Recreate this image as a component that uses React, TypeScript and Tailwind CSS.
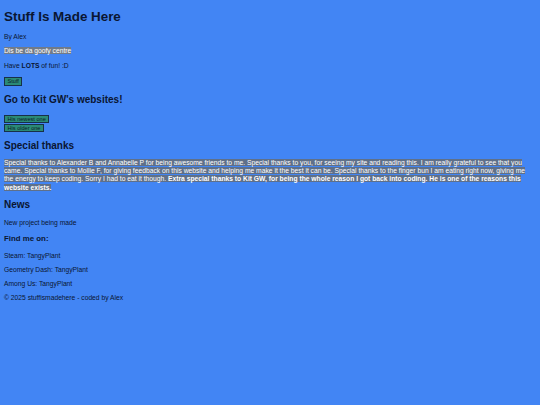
export default function App() {
  const btn =
    "border border-[#173048] bg-[#2a8a76] px-[2.5px] text-[5.6px] leading-[7px] text-[#0a1a2a]";

  return (
    <div className="min-h-[405px] w-full bg-[#4285f4] px-[4px] font-['Liberation_Sans',Arial,sans-serif] text-[6.72px] leading-[7.75px] text-[#0a1632]">
      <div className="flex flex-col items-start">
        <h1 className="mt-[8.5px] text-[13.4px] font-bold leading-[15px]">Stuff Is Made Here</h1>
        <p className="mt-[9.5px]">By Alex</p>
        <p className="mt-[6.25px]">
          <span className="bg-[#717b89] text-white">Dis be da goofy centre</span>
        </p>
        <p className="mt-[7.25px]">
          Have <b>LOTS</b> of fun! :D
        </p>
        <button className={`mt-[7.25px] h-[9px] ${btn}`}>Stuff</button>

        <h2 className="mt-[8.25px] text-[10px] font-bold leading-[11.5px]">Go to Kit GW's websites!</h2>
        <button className={`mt-[9.25px] h-[8px] ${btn}`}>His newest one</button>
        <button className={`mt-[1px] h-[8px] ${btn}`}>His older one</button>

        <h2 className="mt-[8.25px] text-[10px] font-bold leading-[11.5px]">Special thanks</h2>
        <p className="mt-[7px] leading-[8.33px]">
          <span className="bg-[#5f7089] text-white">
            Special thanks to Alexander B and Annabelle P for being awesome friends to me. Special thanks to you, for
            seeing my site and reading this. I am really grateful to see that you came. Special thanks to Mollie F, for
            giving feedback on this website and helping me make it the best it can be. Special thanks to the finger bun
            I am eating right now, giving me the energy to keep coding. Sorry I had to eat it though.{" "}
            <b>
              Extra special thanks to Kit GW, for being the whole reason I got back into coding. He is one of the
              reasons this website exists.
            </b>
          </span>
        </p>

        <h2 className="mt-[7.15px] text-[10px] font-bold leading-[11.5px]">News</h2>
        <p className="mt-[8.25px]">New project being made</p>

        <h3 className="mt-[7.75px] text-[7.86px] font-bold leading-[9px]">Find me on:</h3>
        <p className="mt-[8.5px]">Steam: TangyPlant</p>
        <p className="mt-[6.25px]">Geometry Dash: TangyPlant</p>
        <p className="mt-[6.25px]">Among Us: TangyPlant</p>
        <p className="mt-[6.25px]">© 2025 stuffismadehere - coded by Alex</p>
      </div>
    </div>
  );
}
